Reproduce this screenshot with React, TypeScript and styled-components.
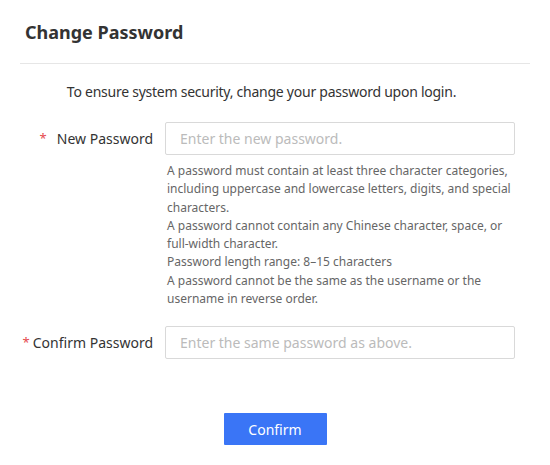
import React from "react";
import styled, { createGlobalStyle } from "styled-components";

const Global = createGlobalStyle`
  html, body { margin: 0; padding: 0; background: #fff; }
  body { font-family: "Noto Sans", "Open Sans", sans-serif; color: #333; }
  * { box-sizing: border-box; }
`;

const Dialog = styled.div`
  width: 550px;
  height: 465px;
  background: #fff;
  display: flex;
  flex-direction: column;
`;

const Header = styled.div`
  margin: 0 20px;
  padding: 18px 5px 0;
  height: 64px;
  border-bottom: 1px solid #e6e6e6;
`;

const Title = styled.h1`
  margin: 0;
  font-size: 18px;
  line-height: 28px;
  font-weight: 700;
  color: #333;
`;

const Intro = styled.p`
  margin: 17px 0 0;
  padding-right: 27px;
  text-align: center;
  font-size: 14px;
  line-height: 22px;
  letter-spacing: -0.25px;
  color: #333;
`;

const Form = styled.div`
  margin-top: 19px;
  display: flex;
  flex-direction: column;
`;

const Row = styled.div<{ $gapAfter: number }>`
  display: grid;
  grid-template-columns: 153px 350px;
  column-gap: 12px;
  margin-bottom: ${(p) => p.$gapAfter}px;
`;

const Label = styled.label`
  display: flex;
  justify-content: flex-end;
  align-items: center;
  height: 32px;
  font-size: 14px;
  color: #333;
  white-space: nowrap;
`;

const Star = styled.span<{ $gap: number }>`
  color: #e5484d;
  margin-right: ${(p) => p.$gap}px;
  font-size: 13px;
`;

const Input = styled.input`
  width: 350px;
  height: 33px;
  border: 1px solid #d9d9d9;
  border-radius: 2px;
  padding: 0 14px;
  font-family: inherit;
  font-size: 14px;
  color: #333;
  outline: none;
  &::placeholder { color: #bbb; }
`;

const Help = styled.div`
  grid-column: 2;
  padding: 7px 0 0 2px;
  font-size: 12px;
  line-height: 18.3px;
  color: #666;
`;

const Footer = styled.div`
  display: flex;
  justify-content: center;
  margin-top: 54px;
`;

const Button = styled.button`
  width: 103px;
  height: 32px;
  border: none;
  border-radius: 1px;
  background: #3a75f6;
  color: #fff;
  font-family: inherit;
  font-size: 14px;
  cursor: pointer;
`;

export default function App() {
  return (
    <>
      <Global />
      <Dialog>
        <Header>
          <Title>Change Password</Title>
        </Header>
        <Intro>To ensure system security, change your password upon login.</Intro>
        <Form>
          <Row $gapAfter={18}>
            <Label>
              <Star $gap={10}>*</Star>New Password
            </Label>
            <Input placeholder="Enter the new password." />
            <Help>
              A password must contain at least three character categories, including uppercase and lowercase letters, digits, and special characters.
              <br />
              A password cannot contain any Chinese character, space, or full-width character.
              <br />
              Password length range: 8–15 characters
              <br />
              A password cannot be the same as the username or the username in reverse order.
            </Help>
          </Row>
          <Row $gapAfter={0}>
            <Label>
              <Star $gap={3}>*</Star>Confirm Password
            </Label>
            <Input placeholder="Enter the same password as above." />
          </Row>
        </Form>
        <Footer>
          <Button>Confirm</Button>
        </Footer>
      </Dialog>
    </>
  );
}
